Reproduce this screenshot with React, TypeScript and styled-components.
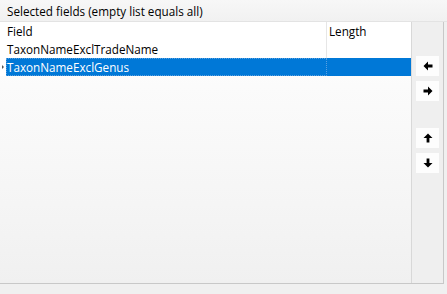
import React from "react";
import styled, { createGlobalStyle } from "styled-components";

const GlobalStyle = createGlobalStyle`
  html, body {
    margin: 0;
    padding: 0;
    background: #f0f0f0;
    font-family: "Open Sans", "Noto Sans", sans-serif;
    font-size: 11.7px;
    color: #000;
  }
`;

type Row = { field: string; length: string };

const rows: Row[] = [
  { field: "TaxonNameExclTradeName", length: "" },
  { field: "TaxonNameExclGenus", length: "" },
];

const selectedIndex = 1;

const App: React.FC = () => {
  return (
    <>
      <GlobalStyle />
      <Panel>
        <Caption>Selected fields (empty list equals all)</Caption>
        <Body>
          <Grid>
            <HeaderRow>
              <Marker />
              <FieldCell>Field</FieldCell>
              <LengthCell>Length</LengthCell>
            </HeaderRow>
            {rows.map((r, i) => (
              <DataRow key={r.field}>
                <Marker>{i === selectedIndex ? <Dot /> : null}</Marker>
                <FieldCell selected={i === selectedIndex}>{r.field}</FieldCell>
                <LengthCell selected={i === selectedIndex}>{r.length}</LengthCell>
              </DataRow>
            ))}
          </Grid>
          <Tools>
            <ToolButton title="Remove">
              <Arrow dir="left" />
            </ToolButton>
            <ToolButton title="Add">
              <Arrow dir="right" />
            </ToolButton>
            <Spacer />
            <ToolButton title="Up">
              <Arrow dir="up" />
            </ToolButton>
            <ToolButton title="Down">
              <Arrow dir="down" />
            </ToolButton>
          </Tools>
        </Body>
      </Panel>
    </>
  );
};

const Arrow: React.FC<{ dir: "left" | "right" | "up" | "down" }> = ({ dir }) => {
  const rot = { right: 0, down: 90, left: 180, up: 270 }[dir];
  return (
    <svg width="10" height="10" viewBox="0 0 10 10">
      <path
        d="M0.5 3.6 H5 V0.5 L9.5 5 L5 9.5 V6.4 H0.5 Z"
        fill="#000"
        transform={`rotate(${rot} 5 5)`}
      />
    </svg>
  );
};

const Panel = styled.div`
  width: 447px;
  height: 294px;
  display: flex;
  flex-direction: column;
  background: #f0f0f0;
`;

const Caption = styled.div`
  height: 22px;
  box-sizing: border-box;
  padding: 3px 0 0 7px;
  line-height: 17px;
  background: linear-gradient(#f7f7f7, #f1f1f1);
  border-bottom: 1px solid #e3e3e3;
`;

const Body = styled.div`
  display: flex;
  width: 444px;
  height: 262px;
  box-sizing: border-box;
  border-right: 1px solid #c8c8c8;
  border-bottom: 1px solid #c8c8c8;
`;

const Grid = styled.div`
  width: 412px;
  box-sizing: border-box;
  border-right: 1px solid #d8d8d8;
  background: linear-gradient(#ffffff 0%, #fbfbfb 25%, #f5f5f5 70%, #f0f0f0 100%);
`;

const HeaderRow = styled.div`
  display: flex;
  height: 18px;
  background: #fff;
`;

const DataRow = styled.div`
  display: flex;
  height: 18px;
  background: #fff;
`;

const Marker = styled.div`
  width: 6px;
  flex: none;
  display: flex;
  align-items: center;
  justify-content: center;
  background: #fff;
`;

const Dot = styled.span`
  width: 0;
  height: 0;
  border-top: 2px solid transparent;
  border-bottom: 2px solid transparent;
  border-left: 2px solid #555;
`;

const FieldCell = styled.div<{ selected?: boolean }>`
  width: 321px;
  flex: none;
  box-sizing: border-box;
  padding-left: 1px;
  line-height: 18px;
  white-space: nowrap;
  background: ${(p) => (p.selected ? "#0078d7" : "#fff")};
  color: ${(p) => (p.selected ? "#fff" : "#000")};
  border-right: 1px solid ${(p) => (p.selected ? "#0078d7" : "#e6e6e6")};
  outline: ${(p) => (p.selected ? "1px dotted #5aa0e0" : "none")};
  outline-offset: -1px;
`;

const LengthCell = styled.div<{ selected?: boolean }>`
  flex: 1;
  padding-left: 2px;
  line-height: 18px;
  background: ${(p) => (p.selected ? "#0078d7" : "#fff")};
  color: ${(p) => (p.selected ? "#fff" : "#000")};
`;

const Tools = styled.div`
  flex: 1;
  display: flex;
  flex-direction: column;
  align-items: center;
  padding-top: 34px;
  gap: 5px;
  background: #efefef;
`;

const ToolButton = styled.button`
  width: 23px;
  height: 20px;
  padding: 0;
  border: none;
  background: #fdfdfd;
  display: flex;
  align-items: center;
  justify-content: center;
`;

const Spacer = styled.div`
  height: 17px;
`;

export default App;
